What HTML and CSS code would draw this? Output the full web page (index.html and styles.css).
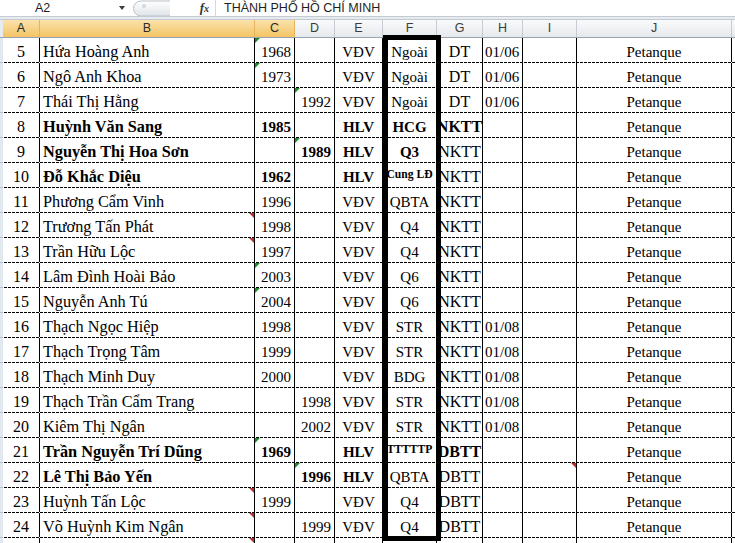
FILE: index.html
```html
<!DOCTYPE html>
<html lang="vi">
<head>
<meta charset="utf-8">
<title>Sheet</title>
<link rel="stylesheet" href="styles.css">
</head>
<body>
<div class="app">
  <div class="fbar">
    <div class="namebox"><span class="nb-text">A2</span><span class="nb-arrow"></span></div>
    <div class="splitter">
      <svg width="40" height="17" viewBox="0 0 40 17"><defs><linearGradient id="pg" x1="0" y1="0" x2="0" y2="1"><stop offset="0" stop-color="#ffffff"/><stop offset="1" stop-color="#dfe3e8"/></linearGradient></defs><path d="M40 1 H11 A7.5 7.5 0 0 0 11 16 H40" fill="url(#pg)" stroke="#b9c0c9"/><circle cx="14" cy="6" r="2" fill="#d3d8de"/></svg>
    </div>
    <div class="fxbtn"><span class="fx">f<i>x</i></span></div>
    <div class="formula">THÀNH PHỐ HỒ CHÍ MINH</div>
  </div>
  <div class="gap"></div>

  <div class="sheet">
    <div class="cols hdr">
      <div class="strip"></div>
      <div class="hc sel">A</div><div class="hc sel">B</div><div class="hc sel">C</div>
      <div class="hc">D</div><div class="hc">E</div><div class="hc">F</div><div class="hc">G</div>
      <div class="hc">H</div><div class="hc">I</div><div class="hc">J</div><div class="hc k"></div>
    </div>

    <div class="cols row"><div class="strip"></div><div class="c ca">5</div><div class="c cb">Hứa Hoàng Anh</div><div class="c cn gl">1968</div><div class="c cn"></div><div class="c cm">VĐV</div><div class="c cm cf">Ngoài</div><div class="c cm cg">DT</div><div class="c ch">01/06</div><div class="c"></div><div class="c cm">Petanque</div><div class="k"></div></div>
    <div class="cols row"><div class="strip"></div><div class="c ca">6</div><div class="c cb">Ngô Anh Khoa</div><div class="c cn gl">1973</div><div class="c cn"></div><div class="c cm">VĐV</div><div class="c cm cf">Ngoài</div><div class="c cm cg">DT</div><div class="c ch">01/06</div><div class="c"></div><div class="c cm">Petanque</div><div class="k"></div></div>
    <div class="cols row"><div class="strip"></div><div class="c ca">7</div><div class="c cb">Thái Thị Hằng</div><div class="c cn"></div><div class="c cn gl">1992</div><div class="c cm">VĐV</div><div class="c cm cf">Ngoài</div><div class="c cm cg">DT</div><div class="c ch">01/06</div><div class="c"></div><div class="c cm">Petanque</div><div class="k"></div></div>
    <div class="cols row"><div class="strip"></div><div class="c ca">8</div><div class="c cb b">Huỳnh Văn Sang</div><div class="c cn b">1985</div><div class="c cn"></div><div class="c cm b">HLV</div><div class="c cm cf b">HCG</div><div class="c cm cg b">NKTT</div><div class="c ch"></div><div class="c"></div><div class="c cm">Petanque</div><div class="k"></div></div>
    <div class="cols row"><div class="strip"></div><div class="c ca">9</div><div class="c cb b">Nguyễn Thị Hoa Sơn</div><div class="c cn"></div><div class="c cn b gl">1989</div><div class="c cm b">HLV</div><div class="c cm cf b">Q3</div><div class="c cm cg">NKTT</div><div class="c ch"></div><div class="c"></div><div class="c cm">Petanque</div><div class="k"></div></div>
    <div class="cols row"><div class="strip"></div><div class="c ca">10</div><div class="c cb b">Đỗ Khắc Diệu</div><div class="c cn b">1962</div><div class="c cn"></div><div class="c cm b">HLV</div><div class="c cm cf b sm">Cung LĐ</div><div class="c cm cg">NKTT</div><div class="c ch"></div><div class="c"></div><div class="c cm">Petanque</div><div class="k"></div></div>
    <div class="cols row"><div class="strip"></div><div class="c ca">11</div><div class="c cb">Phương Cẩm Vinh</div><div class="c cn">1996</div><div class="c cn"></div><div class="c cm">VĐV</div><div class="c cm cf">QBTA</div><div class="c cm cg">NKTT</div><div class="c ch"></div><div class="c"></div><div class="c cm">Petanque</div><div class="k"></div></div>
    <div class="cols row"><div class="strip"></div><div class="c ca">12</div><div class="c cb rd">Trương Tấn Phát</div><div class="c cn">1998</div><div class="c cn"></div><div class="c cm">VĐV</div><div class="c cm cf">Q4</div><div class="c cm cg">NKTT</div><div class="c ch"></div><div class="c"></div><div class="c cm">Petanque</div><div class="k"></div></div>
    <div class="cols row"><div class="strip"></div><div class="c ca">13</div><div class="c cb rd">Trần Hữu Lộc</div><div class="c cn">1997</div><div class="c cn"></div><div class="c cm">VĐV</div><div class="c cm cf">Q4</div><div class="c cm cg">NKTT</div><div class="c ch"></div><div class="c"></div><div class="c cm">Petanque</div><div class="k"></div></div>
    <div class="cols row"><div class="strip"></div><div class="c ca">14</div><div class="c cb">Lâm Đình Hoài Bảo</div><div class="c cn gl">2003</div><div class="c cn"></div><div class="c cm">VĐV</div><div class="c cm cf">Q6</div><div class="c cm cg">NKTT</div><div class="c ch"></div><div class="c"></div><div class="c cm">Petanque</div><div class="k"></div></div>
    <div class="cols row"><div class="strip"></div><div class="c ca">15</div><div class="c cb">Nguyễn Anh Tú</div><div class="c cn gl">2004</div><div class="c cn"></div><div class="c cm">VĐV</div><div class="c cm cf">Q6</div><div class="c cm cg">NKTT</div><div class="c ch"></div><div class="c"></div><div class="c cm">Petanque</div><div class="k"></div></div>
    <div class="cols row"><div class="strip"></div><div class="c ca">16</div><div class="c cb">Thạch Ngọc Hiệp</div><div class="c cn">1998</div><div class="c cn"></div><div class="c cm">VĐV</div><div class="c cm cf">STR</div><div class="c cm cg">NKTT</div><div class="c ch">01/08</div><div class="c"></div><div class="c cm">Petanque</div><div class="k"></div></div>
    <div class="cols row"><div class="strip"></div><div class="c ca">17</div><div class="c cb">Thạch Trọng Tâm</div><div class="c cn">1999</div><div class="c cn"></div><div class="c cm">VĐV</div><div class="c cm cf">STR</div><div class="c cm cg">NKTT</div><div class="c ch">01/08</div><div class="c"></div><div class="c cm">Petanque</div><div class="k"></div></div>
    <div class="cols row"><div class="strip"></div><div class="c ca">18</div><div class="c cb">Thạch Minh Duy</div><div class="c cn">2000</div><div class="c cn"></div><div class="c cm">VĐV</div><div class="c cm cf">BDG</div><div class="c cm cg">NKTT</div><div class="c ch">01/08</div><div class="c"></div><div class="c cm">Petanque</div><div class="k"></div></div>
    <div class="cols row"><div class="strip"></div><div class="c ca">19</div><div class="c cb">Thạch Trần Cẩm Trang</div><div class="c cn"></div><div class="c cn">1998</div><div class="c cm">VĐV</div><div class="c cm cf">STR</div><div class="c cm cg">NKTT</div><div class="c ch">01/08</div><div class="c"></div><div class="c cm">Petanque</div><div class="k"></div></div>
    <div class="cols row"><div class="strip"></div><div class="c ca">20</div><div class="c cb">Kiêm Thị Ngân</div><div class="c cn"></div><div class="c cn">2002</div><div class="c cm">VĐV</div><div class="c cm cf">STR</div><div class="c cm cg">NKTT</div><div class="c ch">01/08</div><div class="c"></div><div class="c cm">Petanque</div><div class="k"></div></div>
    <div class="cols row"><div class="strip"></div><div class="c ca">21</div><div class="c cb b">Trần Nguyễn Trí Dũng</div><div class="c cn b gl">1969</div><div class="c cn"></div><div class="c cm b">HLV</div><div class="c cm cf b sm">TTTTTP</div><div class="c cm cg b">DBTT</div><div class="c ch"></div><div class="c"></div><div class="c cm">Petanque</div><div class="k"></div></div>
    <div class="cols row"><div class="strip"></div><div class="c ca">22</div><div class="c cb b">Lê Thị Bảo Yến</div><div class="c cn"></div><div class="c cn b gl">1996</div><div class="c cm b">HLV</div><div class="c cm cf">QBTA</div><div class="c cm cg">DBTT</div><div class="c ch"></div><div class="c rd"></div><div class="c cm">Petanque</div><div class="k"></div></div>
    <div class="cols row"><div class="strip"></div><div class="c ca">23</div><div class="c cb rd">Huỳnh Tấn Lộc</div><div class="c cn">1999</div><div class="c cn"></div><div class="c cm">VĐV</div><div class="c cm cf">Q4</div><div class="c cm cg">DBTT</div><div class="c ch"></div><div class="c"></div><div class="c cm">Petanque</div><div class="k"></div></div>
    <div class="cols row"><div class="strip"></div><div class="c ca">24</div><div class="c cb rd">Võ Huỳnh Kim Ngân</div><div class="c cn"></div><div class="c cn">1999</div><div class="c cm">VĐV</div><div class="c cm cf">Q4</div><div class="c cm cg">DBTT</div><div class="c ch"></div><div class="c"></div><div class="c cm">Petanque</div><div class="k"></div></div>
    <div class="cols row"><div class="strip"></div><div class="c ca"></div><div class="c cb rd"></div><div class="c cn"></div><div class="c cn"></div><div class="c cm"></div><div class="c cm cf"></div><div class="c cm cg"></div><div class="c ch"></div><div class="c"></div><div class="c cm"></div><div class="k"></div></div>

    <div class="fbox"></div>
  </div>
</div>
</body>
</html>
```
FILE: styles.css
```css
* { box-sizing: border-box; }
html, body { margin: 0; padding: 0; }
body {
  width: 735px;
  height: 543px;
  overflow: hidden;
  background: #ffffff;
}
.app { width: 735px; height: 543px; overflow: hidden; }

/* formula bar */
.fbar {
  display: flex;
  height: 17px;
  background: #ffffff;
  border-bottom: 1px solid #c5cbd3;
  font-family: "Liberation Sans", Arial, sans-serif;
}
.namebox {
  width: 130px;
  position: relative;
  display: flex;
  align-items: center;
}
.nb-text {
  padding-left: 35px;
  font-size: 12.5px;
  color: #1e1e1e;
  line-height: 16px;
}
.nb-arrow {
  position: absolute;
  left: 119px;
  top: 6px;
  width: 0; height: 0;
  border-left: 3.5px solid transparent;
  border-right: 3.5px solid transparent;
  border-top: 4px solid #3c3c3c;
}
.splitter { width: 40px; height: 16px; overflow: hidden; }
.splitter svg { display: block; }
.fxbtn {
  width: 45px;
  display: flex;
  align-items: center;
  justify-content: flex-end;
  padding-right: 6px;
}
.fx {
  font-family: "Liberation Serif", "Times New Roman", serif;
  font-style: italic;
  font-weight: bold;
  font-size: 13px;
  color: #333;
  line-height: 16px;
}
.fx i { font-size: 10px; }
.formula {
  flex: 1;
  border-left: 1px solid #d5d9de;
  padding-left: 8px;
  font-size: 12.5px;
  line-height: 16px;
  color: #1e1e1e;
  white-space: nowrap;
}
.gap { height: 2px; background: #e7ebf0; }

/* sheet */
.sheet { position: relative; }
.cols {
  display: grid;
  grid-template-columns: 3px 37px 215px 40px 40px 48px 54px 46px 40px 54px 155px 3px;
}
.hdr {
  height: 19px;
  border-top: 1px solid #c3c9d1;
  border-bottom: 1px solid #9aa4b1;
  font-family: "Liberation Sans", Arial, sans-serif;
  font-size: 12.5px;
  color: #3b3b3b;
}
.hdr .strip { background: #e6ebf1; }
.hc {
  display: flex;
  align-items: center;
  justify-content: center;
  line-height: 17px;
  background: linear-gradient(#f9fafb, #e6e9ed);
  border-right: 1px solid #c6ccd4;
}
.hc.sel {
  background: linear-gradient(#fbe2ac, #f4c463);
  border-right: 1px solid #e3b55d;
  color: #2a2a2a;
}
.hc.k { border-right: none; }

.row {
  height: 25px;
  background-image: repeating-linear-gradient(90deg, #000 0 3px, transparent 3px 4px);
  background-size: 100% 1px;
  background-position: left bottom;
  background-repeat: no-repeat;
  font-family: "Liberation Serif", "Times New Roman", serif;
  font-size: 15px;
  color: #000;
}
.row .strip {
  background: #e2e8ef;
  border-bottom: 1px solid #b5c1cf;
}
.c {
  position: relative;
  height: 24px;
  border-right: 1px solid #000;
  display: flex;
  align-items: flex-end;
  padding: 0 2px 1px 2px;
  line-height: 18px;
  white-space: nowrap;
  overflow: hidden;
}
.ca { justify-content: center; font-size: 16px; }
.cb { padding-left: 3px; font-size: 16.3px; }
.cn { justify-content: flex-end; padding-right: 3px; }
.cm { justify-content: center; padding-left: 0; padding-right: 0; }
.cg { font-size: 16px; overflow: visible; }
.ch { justify-content: flex-start; padding-left: 2px; }
.b { font-weight: bold; }
.sm { font-size: 11.6px; padding-bottom: 3px; }

/* indicator triangles */
.gl::before {
  content: "";
  position: absolute;
  left: 0; top: 0;
  width: 0; height: 0;
  border-top: 5px solid #1f8a2a;
  border-right: 5px solid transparent;
}
.rd::after {
  content: "";
  position: absolute;
  right: 0; top: 0;
  width: 0; height: 0;
  border-top: 5px solid #b8312b;
  border-left: 5px solid transparent;
}

/* thick outline around column F */
.fbox {
  position: absolute;
  left: 383px;
  top: 16px;
  width: 58px;
  height: 506px;
  border: 5px solid #000;
  pointer-events: none;
}
```
